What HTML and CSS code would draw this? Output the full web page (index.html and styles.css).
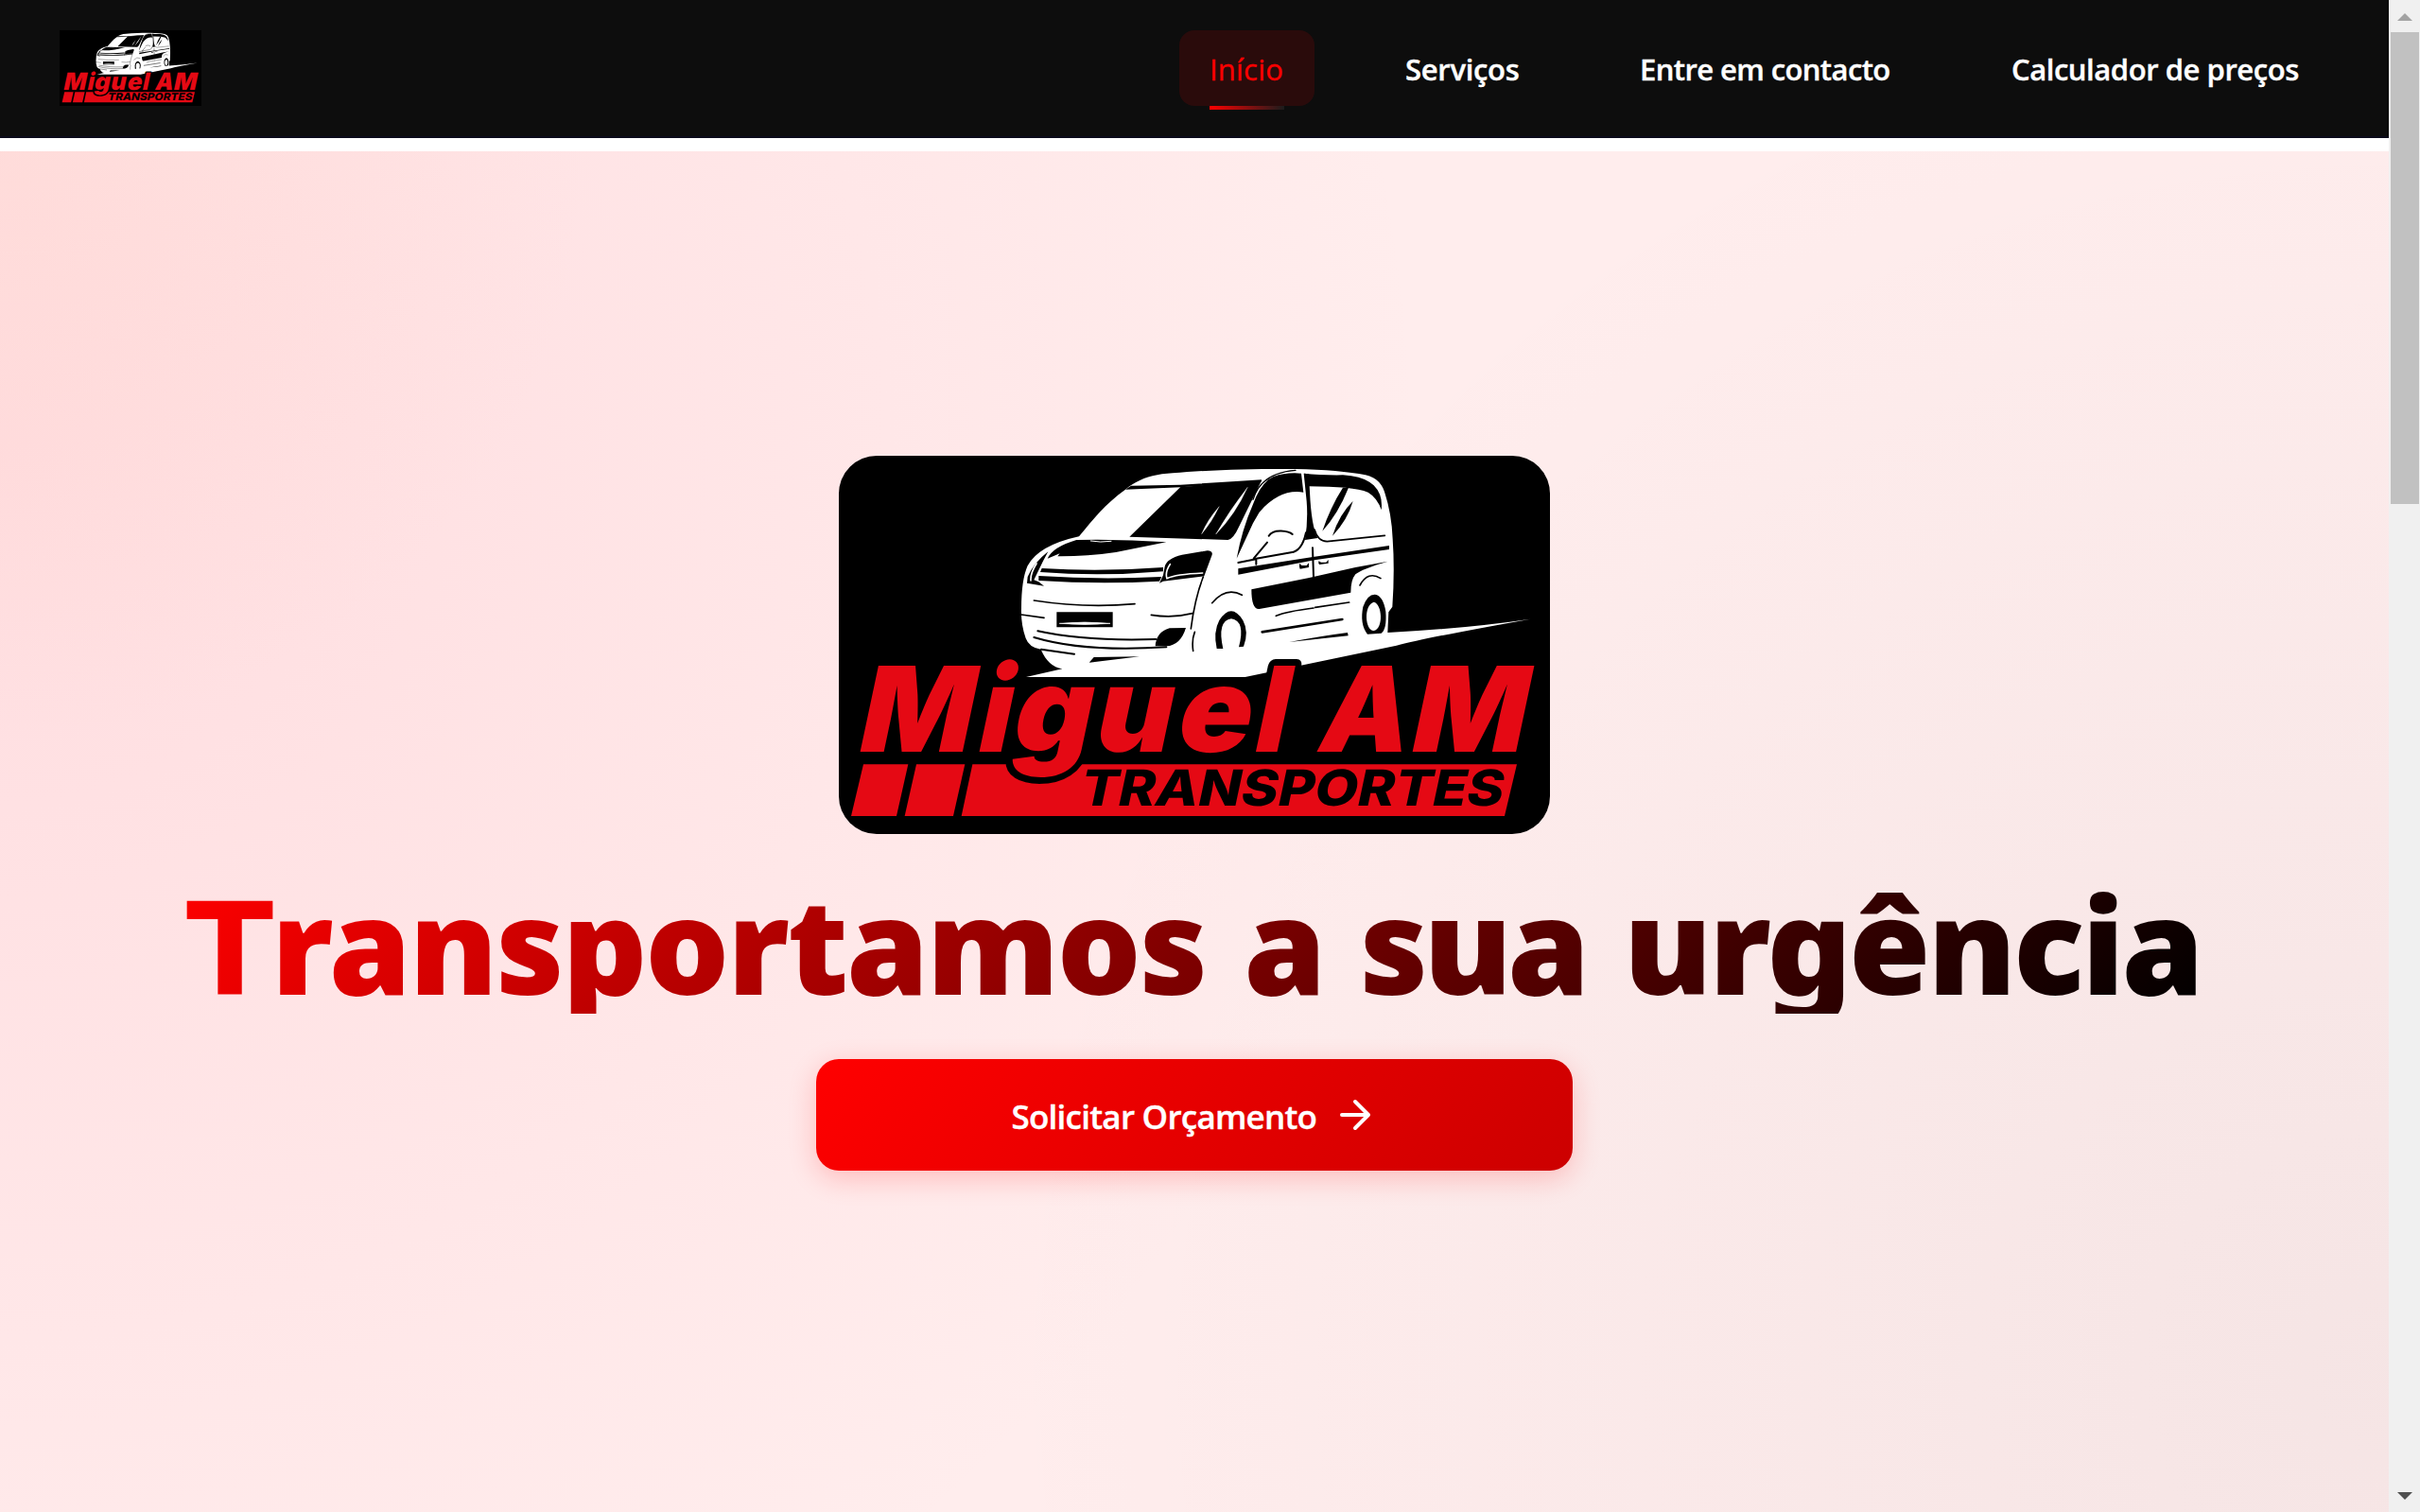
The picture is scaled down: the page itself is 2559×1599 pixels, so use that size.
FILE: index.html
```html
<!DOCTYPE html>
<html lang="pt">
<head>
<meta charset="utf-8">
<title>Miguel AM Transportes</title>
<link rel="stylesheet" href="styles.css">
</head>
<body>
<div class="window">
  <div class="page">
    <header class="nav">
      <svg class="nav-logo" viewBox="0 0 752 400" preserveAspectRatio="none"><use href="#logo"/></svg>
      <nav class="links">
        <a class="link active">Início</a>
        <a class="link services">Serviços</a>
        <a class="link contact">Entre em contacto</a>
        <a class="link prices">Calculador de preços</a>
      </nav>
    </header>
    <main class="hero">
      <svg class="hero-logo" viewBox="0 0 752 400">
        <g id="logo">
          <rect width="752" height="400" fill="#000"/>
          <g transform="translate(-7 -12) scale(.33333)">
            <!-- van body and road -->
            <path fill="#fff" d="M783 292C830 235 865 190 930 143C970 110 1015 95 1080 91C1200 80 1350 77 1470 78C1560 80 1640 86 1692 97Q1738 107 1752 150Q1775 220 1778 300Q1785 400 1777 515L1765 532L1762 597Q2000 585 2215 554Q1900 610 1790 638L1310 738H615L730 712Q685 705 662 650Q625 645 614 615Q598 570 600 520Q600 430 620 385Q655 320 783 292Z"/>
            <g fill="#000">
              <path d="M930 143L948 131L1105 128L1362 112L1362 118L1105 136Z"/>
              <path d="M943 293L1105 135L1362 115L1290 262Q1272 302 1255 303Z"/>
              <path d="M683 362Q700 325 775 303Q920 300 1060 310L900 342Q800 356 715 355L722 346Z"/>
              <path d="M685 340Q640 375 620 420L618 440L672 449L655 436L640 430L668 372Z"/>
              <path d="M665 393Q850 405 1050 390V403Q850 420 660 405Z"/>
              <path d="M655 417Q850 430 1045 420L1038 434Q850 445 655 432Z"/>
              <path d="M1055 388Q1060 362 1110 350L1190 337Q1208 338 1205 350L1180 418L1050 434L1038 440L1050 415Z"/>
              <path d="M712 532H890V580H712Z"/>
              <path d="M1025 640Q1028 595 1070 583L1122 582Q1105 638 1060 640Z"/>
              <path d="M830 675L975 673L815 692Z"/>
              <path d="M1283 362Q1300 270 1335 190Q1360 120 1400 102Q1440 88 1488 92L1495 152Q1420 140 1355 215L1335 250Z"/>
              <path d="M1496 92L1512 94L1515 150Q1520 260 1540 297L1500 303Q1510 240 1505 180Z"/>
              <path d="M1497 92Q1550 98 1620 97Q1690 102 1718 130Q1748 160 1742 208Q1730 170 1700 152Q1650 133 1512 133Z"/>
              <path d="M1620 137L1638 137Q1605 220 1555 275Q1580 200 1620 137Z"/>
              <path d="M1652 180Q1635 240 1587 290Q1610 220 1652 180Z"/>
              <path d="M1288 394L1520 358L1767 321V333L1530 367L1288 413Z"/>
              <path d="M1330 460L1510 424L1660 390L1763 371Q1680 395 1660 412Q1645 430 1645 470L1355 522Q1330 525 1330 460Z"/>
              <path d="M1450 627Q1550 608 1635 597L1637 607Z"/>
              <path d="M1482 388V378L1490 384H1505L1512 376V390L1484 395ZM1543 378V370L1551 374H1567L1574 366V377L1546 381Z"/>
              <path d="M1220 648Q1208 595 1228 558Q1266 500 1303 558Q1323 595 1305 641L1290 643Q1312 560 1266 553Q1220 560 1240 648Z"/>
              <path fill-rule="evenodd" d="M1698 602Q1673 570 1684 515Q1698 475 1722 476Q1748 480 1756 530Q1760 585 1742 599ZM1718 500C1685 510 1690 590 1718 591C1750 585 1745 505 1718 500Z"/>
            </g>
            <g fill="none" stroke="#000" stroke-width="5" stroke-linecap="round">
              <path d="M640 495Q800 520 960 506M600 540L672 550M1012 541Q1080 552 1143 536"/>
              <path d="M652 592Q800 625 1027 618M640 612Q800 660 1060 643M663 650L768 665" stroke-width="6"/>
              <path d="M1177 420Q1150 490 1138 585M1150 595Q1140 620 1145 655"/>
              <path d="M1335 175Q1360 90 1470 82" stroke-width="4"/>
              <path d="M1345 362L1455 343Q1490 340 1503 280M1385 290C1400 265 1450 275 1460 285M1380 311L1337 362M1288 375L1345 364V380" stroke-width="6"/>
              <path d="M1530 270Q1540 307 1570 308L1753 289" stroke-width="5"/>
              <path d="M1524 328L1527 420" stroke-width="6"/>
              <path d="M1205 503Q1250 450 1300 478M1674 447Q1700 400 1740 425"/>
              <path d="M1408 544Q1440 530 1527 519M1532 517L1640 501"/>
              <path d="M1364 595L1618 555" stroke-width="8"/>
            </g>
            <g fill="none" stroke="#fff" stroke-width="5" stroke-linecap="round">
              <path d="M1317 137Q1260 210 1217 285Q1280 220 1317 137ZM1227 198Q1190 240 1172 284Q1205 245 1227 198Z" fill="#fff" stroke-width="1"/>
              <path d="M1072 380Q1055 405 1062 425Q1090 412 1175 408M648 378Q628 410 630 432"/>
              <path d="M722 568Q800 560 882 568Q800 575 722 568Z" fill="#fff" stroke-width="2"/>
              <path d="M820 306Q850 312 885 307" stroke-width="3"/>
            </g>
            <!-- red band -->
            <g fill="#e50914">
              <path d="M99 1015H241L204 1179H60Z"/>
              <path d="M267 1015H421L384 1179H230Z"/>
              <path d="M445 1015H2172L2133 1179H410Z"/>
            </g>
            <g class="logo-name" transform="translate(0 975) skewX(-12)">
              <text x="71" y="0" textLength="360" lengthAdjust="spacingAndGlyphs">M</text>
              <text x="449" y="0" textLength="104" lengthAdjust="spacingAndGlyphs">i</text>
              <text class="cut" x="559" y="0" textLength="250" lengthAdjust="spacingAndGlyphs">g</text>
              <text x="820" y="0" textLength="244" lengthAdjust="spacingAndGlyphs">u</text>
              <text x="1080" y="0" textLength="234" lengthAdjust="spacingAndGlyphs">e</text>
              <text class="cut" x="1327" y="0" textLength="102" lengthAdjust="spacingAndGlyphs">l</text>
              <text x="1529" y="0" textLength="284" lengthAdjust="spacingAndGlyphs">A</text>
              <text x="1823" y="0" textLength="364" lengthAdjust="spacingAndGlyphs">M</text>
            </g>
            <g class="logo-sub" transform="translate(0 1145) skewX(-12)">
              <text x="780" y="0" textLength="1342" lengthAdjust="spacingAndGlyphs">TRANSPORTES</text>
            </g>
          </g>
        </g>
      </svg>
      <h1 class="title"><span class="w1"><span class="initial">T</span>ransportamos </span><span class="w2">a </span><span class="w3">sua </span><span class="w4">urgência</span></h1>
      <a class="cta">
        <span class="cta-text">Solicitar Orçamento</span>
        <svg class="cta-icon" viewBox="0 0 24 24"><path d="M5 12h14M12 5l7 7-7 7"/></svg>
      </a>
    </main>
  </div>
  <div class="scrollbar">
    <svg class="arrow" viewBox="0 0 33 34"><path d="M17 14l8 8H9z" fill="#a3a3a3"/></svg>
    <div class="thumb"></div>
    <svg class="arrow down" viewBox="0 0 33 34"><path d="M9 13h16l-8 8z" fill="#505050"/></svg>
  </div>
</div>
</body>
</html>
```
FILE: styles.css
```css
* { box-sizing: border-box; }
body { margin: 0; background: #fff; font-family: "Open Sans", "Noto Sans", sans-serif; overflow: hidden; }
.window { display: flex; width: 2559px; height: 1599px; }
.page { flex: 1; display: flex; flex-direction: column; gap: 14px; }

.nav {
  height: 146px;
  padding: 0 63px;
  display: flex;
  align-items: center;
  justify-content: space-between;
  background: #0d0d0d;
  border-bottom: 2px solid #0a0a1a;
}
.nav-logo { width: 150px; height: 80px; }
.links { display: flex; gap: 64px; }
.link {
  position: relative;
  height: 80px;
  padding: 0 32px;
  border-radius: 16px;
  line-height: 82px;
  font-size: 31px;
  font-weight: 600;
  color: #fff;
  white-space: nowrap;
  -webkit-text-stroke: .4px #fff;
}
.active { width: 143px; font-weight: 500; color: #f00; background: rgba(255, 0, 0, .12); letter-spacing: .2px; -webkit-text-stroke: .3px #f00; }
.active::after {
  content: "";
  position: absolute;
  left: 32px;
  right: 32px;
  bottom: -4px;
  height: 4px;
  background: linear-gradient(90deg, #f00, #1c1c1c);
}
.services { width: 184px; letter-spacing: -.3px; }
.contact { width: 329px; letter-spacing: -.6px; }
.prices { width: 368px; letter-spacing: -.45px; }

.hero {
  flex: 1;
  display: flex;
  flex-direction: column;
  align-items: center;
  padding-top: 322px;
  background:
    radial-gradient(circle at 0 0, rgba(255, 200, 180, .18), transparent 620px),
    radial-gradient(ellipse 1500px 1500px at 0 22%, rgba(255, 190, 198, .34), transparent),
    radial-gradient(ellipse 1500px 1500px at 100% 90%, rgba(30, 40, 40, .045), transparent),
    #ffeded;
}
.hero-logo { width: 752px; height: 400px; border-radius: 40px; }
.title {
  margin: 32px 0 48px;
  width: 2132px;
  height: 158px;
  line-height: 168px;
  font-family: "Noto Sans", "Open Sans", sans-serif;
  font-size: 140px;
  font-weight: 900;
  white-space: nowrap;
  color: transparent;
  background: linear-gradient(135deg, #f00, #000);
  -webkit-background-clip: text;
  background-clip: text;
}
.initial { font-family: "DejaVu Sans", sans-serif; font-weight: 700; font-size: 135px; line-height: 0; letter-spacing: -2px; }
.w1 { letter-spacing: -2.2px; word-spacing: 6px; }
.w2 { word-spacing: -1px; }
.w3 { letter-spacing: -5px; word-spacing: 9px; }
.w4 { letter-spacing: -3.2px; }
.cta {
  width: 800px;
  height: 118px;
  display: flex;
  align-items: center;
  justify-content: center;
  gap: 16px;
  border-radius: 24px;
  background: linear-gradient(135deg, #f00, #c00);
  box-shadow: 0 8px 30px rgba(255, 0, 0, .2);
  color: #fff;
  font-size: 35px;
  font-weight: 600;
}
.cta-text { width: 323px; white-space: nowrap; letter-spacing: -.75px; padding-top: 3px; -webkit-text-stroke: .4px #fff; }
.cta-icon { width: 48px; height: 48px; fill: none; stroke: #fff; stroke-width: 2; stroke-linecap: round; stroke-linejoin: round; }

.logo-name { font: 900 375px Inter, sans-serif; fill: #e50914; }
.logo-name .cut { stroke: #000; stroke-width: 42px; stroke-linejoin: round; paint-order: stroke; }
.logo-sub { font: 800 158px Inter, sans-serif; fill: #000; }

.scrollbar { width: 33px; background: #f0f0f0; display: flex; flex-direction: column; align-items: center; }
.arrow { width: 33px; height: 34px; }
.thumb { width: 30px; height: 499px; background: #c1c1c1; }
.down { margin-top: auto; }
```
